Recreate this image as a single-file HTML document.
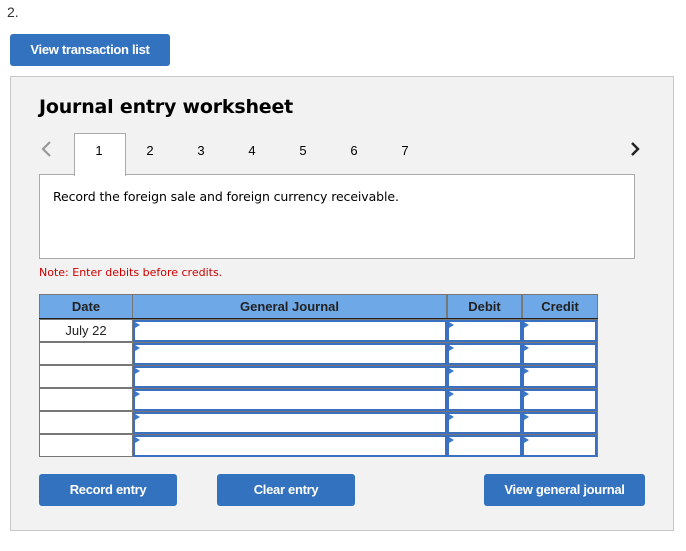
<html><head><style>
body{margin:0;width:686px;height:551px;background:#fff;font-family:"Liberation Sans",sans-serif;position:relative;overflow:hidden}
.a{position:absolute}
.btn{position:absolute;background:#3372be;color:#fff;font-weight:bold;font-size:13px;text-align:center;border-radius:3px;letter-spacing:-0.3px}
.c{position:absolute;background:#fff;box-sizing:border-box}
.in{border:2px solid #3a70bf;}
.tri{position:absolute;left:0;top:0;width:0;height:0;border-left:5px solid #3a78c8;border-top:3px solid transparent;border-bottom:3px solid transparent}
.tab{position:absolute;top:143px;font-size:13px;width:20px;text-align:center}
</style></head><body>
<div class="a" style="left:7px;top:4px;font-size:14px;color:#333">2.</div>
<div class="btn" style="left:10px;top:34px;width:160px;height:32px;line-height:32px">View transaction list</div>
<div class="a" style="left:10px;top:76px;width:662px;height:453px;background:#f2f2f2;border:1px solid #c8c8c8"></div>
<div class="a" style="left:39px;top:96px;font-size:19px;font-weight:bold;font-family:'DejaVu Sans',sans-serif;letter-spacing:-0.2px">Journal entry worksheet</div>
<svg class="a" style="left:40px;top:140px" width="14" height="18"><path d="M10 2 L3 9 L10 16" stroke="#999" stroke-width="2.2" fill="none"/></svg>
<svg class="a" style="left:628px;top:140px" width="14" height="18"><path d="M4 3 L10 9 L4 15" stroke="#222" stroke-width="2.4" fill="none"/></svg>
<div class="a" style="left:74px;top:133px;width:50px;height:42px;background:#fff;border:1px solid #aaa;border-bottom:none;z-index:2"></div>
<div class="a" style="left:39px;top:174px;width:594px;height:83px;background:#fff;border:1px solid #aaa"></div>
<div class="tab" style="left:89px;z-index:3">1</div>
<div class="tab" style="left:140px">2</div>
<div class="tab" style="left:191px">3</div>
<div class="tab" style="left:242px">4</div>
<div class="tab" style="left:293px">5</div>
<div class="tab" style="left:344px">6</div>
<div class="tab" style="left:395px">7</div>
<div class="a" style="left:53px;top:189px;font-family:'DejaVu Sans',sans-serif;letter-spacing:-0.1px;font-size:12.5px">Record the foreign sale and foreign currency receivable.</div>
<div class="a" style="left:39px;top:266px;font-size:11px;color:#c00;font-family:'DejaVu Sans',sans-serif">Note: Enter debits before credits.</div>
<div class="a" style="left:39px;top:294px;width:559px;height:163px;background:#777"></div>
<div class="a" style="left:40px;top:295px;width:92px;height:23px;background:#6fa8e6;font-weight:bold;font-size:13px;text-align:center;line-height:23px;color:#222">Date</div>
<div class="a" style="left:133px;top:295px;width:313px;height:23px;background:#6fa8e6;font-weight:bold;font-size:13px;text-align:center;line-height:23px;color:#222">General Journal</div>
<div class="a" style="left:448px;top:295px;width:73px;height:23px;background:#6fa8e6;font-weight:bold;font-size:13px;text-align:center;line-height:23px;color:#222">Debit</div>
<div class="a" style="left:523px;top:295px;width:74px;height:23px;background:#6fa8e6;font-weight:bold;font-size:13px;text-align:center;line-height:23px;color:#222">Credit</div>
<div class="a" style="left:39px;top:318px;width:559px;height:1px;background:#222"></div>
<div id="rows"></div>
<script>
var h='';for(var i=0;i<6;i++){var y=319+i*23;
h+='<div class="c" style="left:40px;top:'+(y+1)+'px;width:92px;height:21px;font-size:13px;text-align:center;line-height:21px;color:#222">'+(i==0?'July 22':'')+'</div>';
h+='<div class="c in" style="left:133px;top:'+(y+1)+'px;width:314px;height:22px"><div class="tri"></div></div>';
h+='<div class="c in" style="left:447px;top:'+(y+1)+'px;width:75px;height:22px"><div class="tri"></div></div>';
h+='<div class="c in" style="left:522px;top:'+(y+1)+'px;width:75px;height:22px"><div class="tri"></div></div>';}
document.getElementById('rows').innerHTML=h;
</script>
<div class="btn" style="left:39px;top:474px;width:138px;height:32px;line-height:32px">Record entry</div>
<div class="btn" style="left:217px;top:474px;width:138px;height:32px;line-height:32px">Clear entry</div>
<div class="btn" style="left:484px;top:474px;width:161px;height:32px;line-height:32px">View general journal</div>
</body></html>
